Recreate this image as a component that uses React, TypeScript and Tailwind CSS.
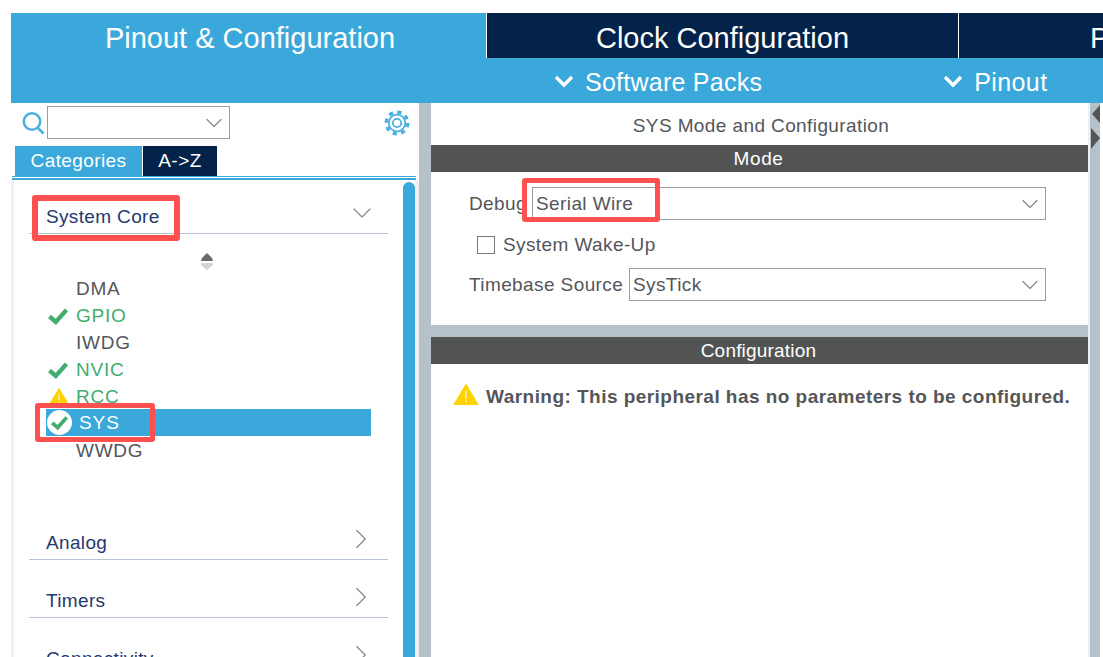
import { ChevronDown, ChevronRight } from "lucide-react";

function Check({ size = 20 }: { size?: number }) {
  return (
    <svg width={size} height={size} viewBox="0 0 20 20" fill="none">
      <path d="M1.5 10.5 L7.8 16 L18.5 4" stroke="#41ad6f" strokeWidth="4.4" />
    </svg>
  );
}

function Warn({ w = 20, h = 17 }: { w?: number; h?: number }) {
  return (
    <svg width={w} height={h} viewBox="0 0 20 17">
      <path d="M10 0.5 L19.7 16.8 L0.3 16.8 Z" fill="#ffd200" stroke="#ffd200" strokeLinejoin="round" />
      <rect x="9.4" y="5.5" width="1.2" height="6.5" fill="#fff3b0" />
      <rect x="9.4" y="13" width="1.2" height="1.6" fill="#fff3b0" />
    </svg>
  );
}

function HeadChevron() {
  return (
    <svg width="20" height="14" viewBox="0 0 20 14" fill="none">
      <path d="M2 3 L10 11 L18 3" stroke="#ffffff" strokeWidth="3.4" />
    </svg>
  );
}

function Row({ label, state }: { label: string; state?: "ok" | "warn" }) {
  const green = state !== undefined;
  return (
    <div className="flex h-[27px] items-center">
      <div className="flex w-[30px] shrink-0 items-center pl-[2px]">
        {state === "ok" && <Check />}
        {state === "warn" && (
          <div className="pl-[1px]">
            <Warn />
          </div>
        )}
      </div>
      <span className={green ? "pt-[1px] leading-[26px] tracking-[0.75px] text-[#41ad6f]" : "pt-[1px] leading-[26px] tracking-[0.75px] text-[#54565a]"}>{label}</span>
    </div>
  );
}

function Section({ label, first }: { label: string; first?: boolean }) {
  return (
    <div className={`flex items-end justify-between border-b border-[#b9c3d6] pb-[5px] pl-[17px] pr-[17px] ${first ? "h-[54px]" : "h-[58px]"}`}>
      <span className="leading-[22px] tracking-[0.35px] text-[#24396f]">{label}</span>
      {first ? (
        <ChevronDown size={32} strokeWidth={0.9} className="mb-[-1px] mr-[-7px] text-[#8a8a8a]" />
      ) : (
        <ChevronRight size={34} strokeWidth={0.9} className="mb-[-2px] mr-[-7px] text-[#8a8a8a]" />
      )}
    </div>
  );
}

function Select({ value, className }: { value: string; className: string }) {
  return (
    <div className={`flex h-[33px] items-center justify-between overflow-hidden border border-[#9a9c9e] pl-[3px] pr-px ${className}`}>
      <span className="pt-[2px]">{value}</span>
      <ChevronDown size={28} strokeWidth={1.1} className="text-[#8a8a8a]" />
    </div>
  );
}

export default function App() {
  return (
    <div className="relative flex h-[657px] w-[1103px] flex-col overflow-hidden bg-white pl-[11px] pt-[13px] font-['Liberation_Sans',sans-serif] text-[19px] tracking-[0.4px] text-[#54565a]">
      {/* top tabs */}
      <div className="flex h-[45px] shrink-0 text-[29px] tracking-normal text-white">
        <div className="flex w-[475px] shrink-0 items-center justify-center bg-[#3aa8db] pl-[3px] pt-[7px]">
          <span>Pinout &amp; Configuration</span>
        </div>
        <div className="w-px shrink-0 bg-white" />
        <div className="flex w-[471px] shrink-0 items-center justify-center bg-[#03234b] pt-[7px]">
          <span>Clock Configuration</span>
        </div>
        <div className="w-px shrink-0 bg-white" />
        <div className="flex w-[145px] shrink-0 items-center bg-[#03234b] pl-[131px] pt-[7px]">P</div>
      </div>
      {/* sub bar */}
      <div className="flex h-[45px] shrink-0 items-center bg-[#3aa8db] pl-[543px] text-[25px] tracking-[0.25px] text-white">
        <HeadChevron />
        <span className="ml-[11px] pt-[5px]">Software Packs</span>
        <div className="ml-[181px]">
          <HeadChevron />
        </div>
        <span className="ml-[11px] pt-[5px] tracking-[0.4px]">Pinout</span>
      </div>
      {/* body */}
      <div className="flex min-h-0 flex-1">
        {/* left panel */}
        <div className="flex w-[408px] shrink-0 flex-col">
          <div className="flex h-[43px] shrink-0 items-center pb-[4px] pl-[10px] pr-[9px]">
            <svg width="24" height="24" viewBox="0 0 24 24" fill="none">
              <circle cx="11" cy="10.5" r="8.2" stroke="#4db0e0" strokeWidth="2.6" />
              <path d="M17 17 L22.5 22.5" stroke="#4db0e0" strokeWidth="2.6" />
            </svg>
            <div className="ml-[2px] flex h-[33px] w-[183px] items-center justify-end border border-[#9a9c9e] pr-px">
              <ChevronDown size={28} strokeWidth={1.1} className="text-[#8a8a8a]" />
            </div>
            <svg width="26" height="26" viewBox="0 0 26 26" fill="none" className="ml-auto">
              <circle cx="13" cy="13" r="10.8" stroke="#4db0e0" strokeWidth="3.4" strokeDasharray="4.2 4.28" />
              <circle cx="13" cy="13" r="8.3" stroke="#4db0e0" strokeWidth="1.8" />
              <circle cx="13" cy="13" r="4.2" stroke="#4db0e0" strokeWidth="1.8" />
            </svg>
          </div>
          <div className="flex h-[30px] shrink-0 pl-[4px] text-white">
            <div className="flex w-[127px] items-center justify-center bg-[#3aa8db]">Categories</div>
            <div className="ml-px flex w-[74px] items-center justify-center bg-[#03234b] tracking-[0.5px]">A-&gt;Z</div>
          </div>
          <div className="ml-px mr-[3px] h-[4px] shrink-0 border-t border-b-2 border-[#3aa8db]" />
          <div className="flex min-h-0 flex-1 overflow-hidden">
            <div className="w-[3px] shrink-0 bg-[#f0f0f0]" />
            <div className="min-w-0 flex-1 px-[15px]">
              <Section label="System Core" first />
              <div className="flex h-[41px] items-start justify-center pt-[19px]">
                <svg width="14" height="17" viewBox="0 0 14 17" className="mr-[3px]">
                  <path d="M7 0 L12 5 L13 8 L1 8 L2 5 Z" fill="#6a6a6a" />
                  <path d="M1 10 L13 10 L13 12 L7 17 L1 12 Z" fill="#d4d4d4" />
                </svg>
              </div>
              <div className="ml-[17px] w-[325px]">
                <Row label="DMA" />
                <Row label="GPIO" state="ok" />
                <Row label="IWDG" />
                <Row label="NVIC" state="ok" />
                <Row label="RCC" state="warn" />
                <div className="mb-px mt-[-1px] flex h-[27px] items-center bg-[#3aa8db] text-white">
                  <div className="ml-px flex h-[25px] w-[25px] items-center justify-center rounded-full bg-white">
                    <Check size={17} />
                  </div>
                  <span className="ml-[7px] pt-[1px] tracking-[0.9px]">SYS</span>
                </div>
                <Row label="WWDG" />
              </div>
              <div className="h-[38px]" />
              <Section label="Analog" />
              <Section label="Timers" />
              <Section label="Connectivity" />
            </div>
            <div className="mt-[2px] w-[12px] shrink-0 rounded-t-[6px] bg-[#3aa8db]" />
            <div className="w-[4px] shrink-0 bg-[#f0f0f0]" />
          </div>
        </div>
        {/* splitter */}
        <div className="w-[12px] shrink-0 bg-[#b6c2c9]" />
        {/* right panel */}
        <div className="flex w-[657px] shrink-0 flex-col bg-[#b6c2c9]">
          <div className="flex h-[222px] shrink-0 flex-col bg-white">
            <div className="flex h-[42px] items-center justify-center pl-[3px] pt-[5px]">SYS Mode and Configuration</div>
            <div className="flex h-[27px] items-center justify-center bg-[#525453] pr-[2px] pt-[1px] tracking-[0.6px] text-white">Mode</div>
            <div className="flex items-center pl-[38px] pt-[15px]">
              <span className="w-[63px] pt-[2px]">Debug</span>
              <Select value="Serial Wire" className="w-[514px]" />
            </div>
            <div className="flex h-[38px] items-center pl-[46px] pt-[11px]">
              <div className="h-[18px] w-[18px] border border-[#7a7a7a]" />
              <span className="ml-[8px] pt-[2px]">System Wake-Up</span>
            </div>
            <div className="flex items-center pl-[38px] pt-[10px]">
              <span className="w-[160px] pt-[2px]">Timebase Source</span>
              <Select value="SysTick" className="w-[417px]" />
            </div>
          </div>
          <div className="mt-[12px] flex h-[27px] shrink-0 items-center justify-center bg-[#525453] pr-[2px] pt-[1px] tracking-[0.2px] text-white">Configuration</div>
          <div className="flex flex-1 items-start bg-white pl-[22px] pt-[19px]">
            <div className="mt-px">
              <Warn w={26} h={21} />
            </div>
            <span className="ml-[7px] font-bold tracking-[0.46px]">Warning: This peripheral has no parameters to be configured.</span>
          </div>
        </div>
        {/* right gutter */}
        <div className="flex w-[15px] shrink-0 bg-white">
          <div className="w-[2px] bg-[#eef1f3]" />
          <div className="flex w-[10px] flex-col items-center bg-[#b6c2c9] pt-[2px]">
            <svg width="9" height="44" viewBox="0 0 9 44">
              <path d="M9 0 L9 18 L1 9 Z" fill="#555" />
              <path d="M0 23 L0 44 L9 33 Z" fill="#555" />
            </svg>
          </div>
        </div>
      </div>
      {/* annotation boxes */}
      <div className="absolute left-[32px] top-[195px] h-[46px] w-[148px] rounded-[3px] border-[6px] border-[#ff5050]" />
      <div className="absolute left-[35px] top-[403px] h-[39px] w-[120px] rounded-[3px] border-[5px] border-[#ff5050]" />
      <div className="absolute left-[522px] top-[178px] h-[44px] w-[138px] rounded-[3px] border-[5px] border-[#ff5050]" />
    </div>
  );
}
